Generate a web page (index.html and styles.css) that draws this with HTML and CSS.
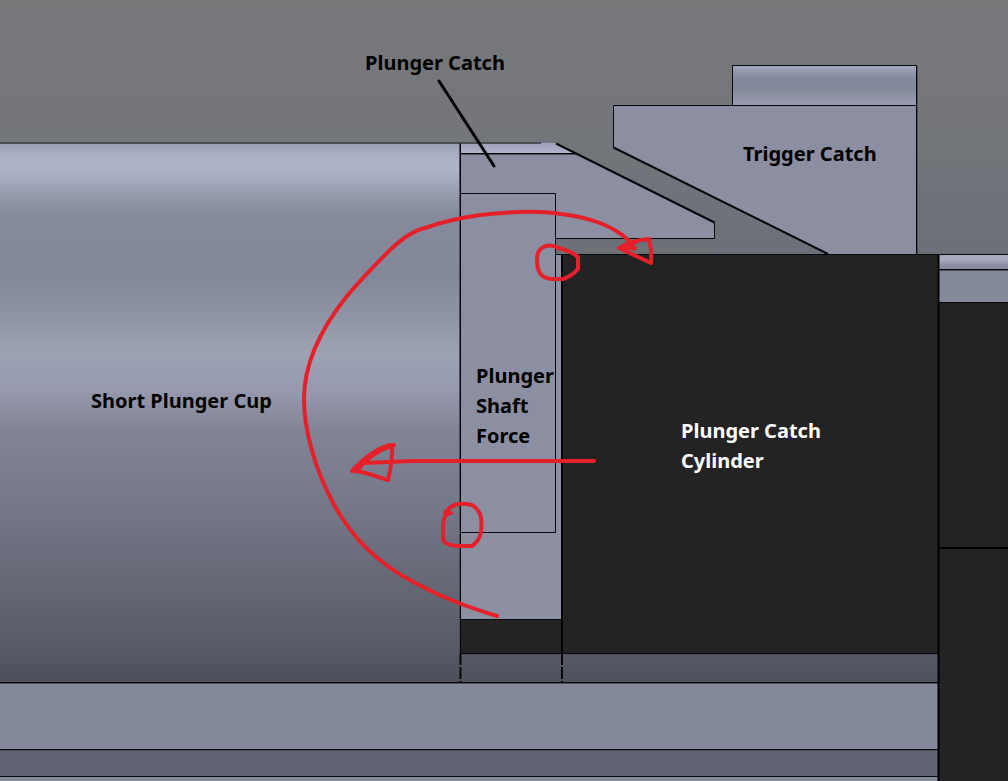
FILE: index.html
```html
<!DOCTYPE html>
<html lang="en">
<head>
<meta charset="utf-8">
<meta name="viewport" content="width=device-width, initial-scale=1">
<title>Plunger and trigger catch</title>
<link rel="stylesheet" href="styles.css">
</head>
<body>
<main class="figure">
<svg class="diagram" viewBox="0 0 1008 781" role="img" aria-label="Plunger catch and trigger catch cross section">
  <defs>
    <linearGradient id="sky" x1="0" y1="0" x2="0" y2="1">
      <stop offset="0" stop-color="#77787a"/>
      <stop offset="0.5" stop-color="#74767a"/>
      <stop offset="1" stop-color="#6b7078"/>
    </linearGradient>
    <linearGradient id="cup" gradientUnits="userSpaceOnUse" x1="0" y1="143" x2="0" y2="683">
      <stop offset="0" stop-color="#9a9db1"/>
      <stop offset="0.025" stop-color="#adb1c7"/>
      <stop offset="0.048" stop-color="#b0b4ca"/>
      <stop offset="0.09" stop-color="#999db0"/>
      <stop offset="0.135" stop-color="#84899b"/>
      <stop offset="0.25" stop-color="#83889a"/>
      <stop offset="0.33" stop-color="#9195a8"/>
      <stop offset="0.39" stop-color="#9da2b5"/>
      <stop offset="0.46" stop-color="#9699ad"/>
      <stop offset="0.53" stop-color="#828597"/>
      <stop offset="0.7" stop-color="#717584"/>
      <stop offset="0.9" stop-color="#5c5f6b"/>
      <stop offset="1" stop-color="#4e4f5a"/>
    </linearGradient>
    <linearGradient id="bevel" x1="0" y1="0" x2="0" y2="1">
      <stop offset="0" stop-color="#9d9fb8"/>
      <stop offset="1" stop-color="#b1b4cb"/>
    </linearGradient>
    <linearGradient id="pin" x1="0" y1="0" x2="0" y2="1">
      <stop offset="0" stop-color="#a2a8bd"/>
      <stop offset="0.3" stop-color="#85899d"/>
      <stop offset="0.6" stop-color="#84889b"/>
      <stop offset="1" stop-color="#9b9eb2"/>
    </linearGradient>
    <linearGradient id="rim" x1="0" y1="0" x2="0" y2="1">
      <stop offset="0" stop-color="#a7a8be"/>
      <stop offset="0.35" stop-color="#aaabc1"/>
      <stop offset="0.75" stop-color="#8d90a4"/>
      <stop offset="1" stop-color="#85899b"/>
    </linearGradient>
    <linearGradient id="shade" x1="0" y1="0" x2="0" y2="1">
      <stop offset="0" stop-color="#585965"/>
      <stop offset="1" stop-color="#4f515d"/>
    </linearGradient>
  </defs>

  <rect class="sky" width="1008" height="256"/>

  <g class="solids">
    <rect class="cup" y="143" width="461" height="540"/>
    <path class="metal" d="M460 154H577L714 222V238H562V620H460Z"/>
    <path class="sky-low" d="M556 239H715V254H556Z"/>
    <path class="bevel" d="M460 143H556L577 154H460Z"/>
    <path class="metal" d="M613 105H917V254H828L613 147Z"/>
    <rect class="pin" x="733" y="66" width="184" height="39"/>
    <rect class="dark" x="562" y="254" width="377" height="399"/>
    <rect class="dark" x="460" y="619" width="102" height="34"/>
    <rect class="shade" x="460" y="653" width="479" height="30"/>
    <rect class="rail" y="683" width="939" height="67"/>
    <rect class="rail-shadow" y="750" width="939" height="27"/>
    <rect class="rail" y="777" width="939" height="4"/>
    <rect class="rim" x="938" y="254" width="70" height="15"/>
    <rect class="rail" x="938" y="269" width="70" height="33"/>
    <rect class="dark" x="938" y="302" width="70" height="479"/>
  </g>

  <g class="edges">
    <path class="soft" d="M0 142.500H541M0 683.500H938M0 750.500H938M460 654.500H938M460 154.500H577M938 270.500H1008M459.500 143V683M917.500 66V254"/>
    <path class="soft" d="M0 143.500H541"/>
    <path d="M460.500 143V653M460 153.500H577M460 193.500H555.500V532.500H460M555.500 238V254M556 238.500H714.500V222.500M556 254.500H1008"/>
    <path d="M732.500 105V65.500H916.500V254M916 105.500H613.500V147.500"/>
    <path class="slope" d="M556 143.500L714.500 222.500M613.500 147.500L828 254"/>
    <path d="M460 619.500H562M0 749.500H938M0 776.500H938M938 269.500H1008M938 302.500H1008M0 682.500H938M460 653.500H938"/>
    <path class="thick" d="M562 254V653M938.500 254V781M938 548H1008"/>
    <path class="broken" d="M460.500 653V683M562 653V683"/>
  </g>

  <path class="leader" d="M439 81L494 166"/>

  <g class="marks">
    <path d="M497 616C468 607 445 599 417 584C374 562 349 534 331 499C315 468 304 430 304 399C304 360 323 326 347 296C362 278 374 266 391 249C404 237 415 230 425 228C444 221 460 218 480 215C506 212 535 210 561 214C590 217 615 227 628 240L634 249"/>
    <path d="M635 248L619 248Q633 240 649 239Q652 250 651 263L619 248L634 243"/>
    <path d="M556 247C546 243 537 248 537 259C537 271 540 278 552 279H563Q572 276 578 269V257Q573 252 556 247"/>
    <path d="M594 461H412L364 463"/>
    <path d="M394 445Q374 447 352 471C364 471 374 476 388 480Q393 460 392 446"/>
    <path class="heavy" d="M389 446Q371 452 358 468"/>
    <path d="M451 513L445 513C452 504 458 502 472 505Q480 510 481 518C483 534 479 541 472 546H458Q444 545 443 539V525Q443 516 449 513"/>
  </g>

  <g class="labels">
    <text x="365" y="70">Plunger Catch</text>
    <text x="743" y="161">Trigger Catch</text>
    <text x="91" y="408">Short Plunger Cup</text>
    <text x="476" y="383">Plunger<tspan x="476" dy="30">Shaft</tspan><tspan x="476" dy="30">Force</tspan></text>
    <text class="light" x="681" y="438">Plunger Catch<tspan x="681" dy="30">Cylinder</tspan></text>
  </g>
</svg>
</main>
</body>
</html>
```

FILE: styles.css
```css
body {
  margin: 0;
  background: #232323;
}

.diagram {
  display: block;
  width: 100%;
  height: auto;
}

.sky { fill: url(#sky); }
.sky-low { fill: #6c7178; }
.cup { fill: url(#cup); }
.bevel { fill: url(#bevel); }
.pin { fill: url(#pin); }
.rim { fill: url(#rim); }
.shade { fill: url(#shade); }
.metal { fill: #8c8ea2; }
.dark { fill: #232323; }
.rail { fill: #84889b; }
.rail-shadow { fill: #616472; }

.edges {
  fill: none;
  stroke: #08080c;
  stroke-width: 1;
}

.edges .soft { stroke: #4c4e58; }
.edges .slope { stroke-width: 2; }
.edges .thick { stroke: #000; stroke-width: 2; }
.edges .broken { stroke-width: 2; stroke-dasharray: 12 2; }

.leader {
  stroke: #000;
  stroke-width: 3;
  stroke-linecap: round;
}

.marks {
  fill: none;
  stroke: #e6202a;
  stroke-width: 4;
  stroke-linecap: round;
  stroke-linejoin: round;
}

.marks .heavy { stroke-width: 6; }

.labels {
  fill: #000;
  font-family: "Noto Sans", "Open Sans", sans-serif;
  font-size: 20px;
  font-weight: 700;
}

.labels .light { fill: #fff; }
```
